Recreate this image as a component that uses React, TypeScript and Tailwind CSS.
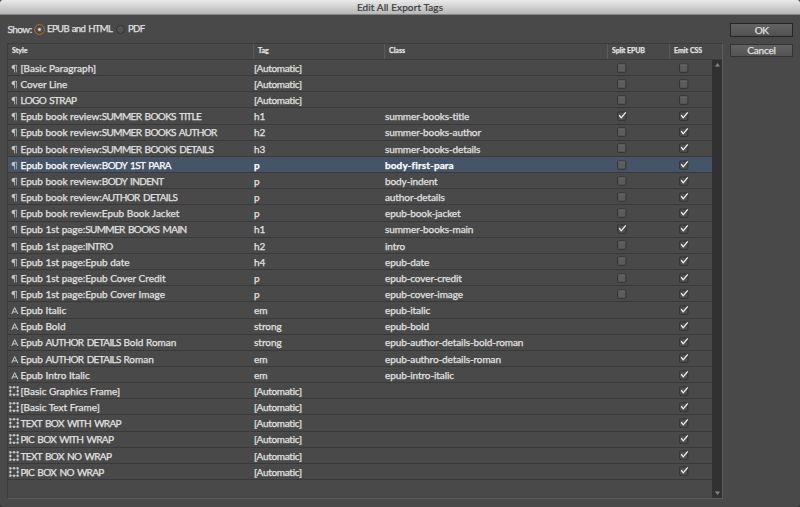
import React from "react";

type Kind = "para" | "char" | "object";
type Row = { kind: Kind; name: string; tag: string; cls?: string; split?: boolean; emit: boolean; selected?: boolean };

const rows: Row[] = [
  { kind: "para", name: "[Basic Paragraph]", tag: "[Automatic]", split: false, emit: false },
  { kind: "para", name: "Cover Line", tag: "[Automatic]", split: false, emit: false },
  { kind: "para", name: "LOGO STRAP", tag: "[Automatic]", split: false, emit: false },
  { kind: "para", name: "Epub book review:SUMMER BOOKS TITLE", tag: "h1", cls: "summer-books-title", split: true, emit: true },
  { kind: "para", name: "Epub book review:SUMMER BOOKS AUTHOR", tag: "h2", cls: "summer-books-author", split: false, emit: true },
  { kind: "para", name: "Epub book review:SUMMER BOOKS DETAILS", tag: "h3", cls: "summer-books-details", split: false, emit: true },
  { kind: "para", name: "Epub book review:BODY 1ST PARA", tag: "p", cls: "body-first-para", split: false, emit: true, selected: true },
  { kind: "para", name: "Epub book review:BODY INDENT", tag: "p", cls: "body-indent", split: false, emit: true },
  { kind: "para", name: "Epub book review:AUTHOR DETAILS", tag: "p", cls: "author-details", split: false, emit: true },
  { kind: "para", name: "Epub book review:Epub Book Jacket", tag: "p", cls: "epub-book-jacket", split: false, emit: true },
  { kind: "para", name: "Epub 1st page:SUMMER BOOKS MAIN", tag: "h1", cls: "summer-books-main", split: true, emit: true },
  { kind: "para", name: "Epub 1st page:INTRO", tag: "h2", cls: "intro", split: false, emit: true },
  { kind: "para", name: "Epub 1st page:Epub date", tag: "h4", cls: "epub-date", split: false, emit: true },
  { kind: "para", name: "Epub 1st page:Epub Cover Credit", tag: "p", cls: "epub-cover-credit", split: false, emit: true },
  { kind: "para", name: "Epub 1st page:Epub Cover Image", tag: "p", cls: "epub-cover-image", split: false, emit: true },
  { kind: "char", name: "Epub Italic", tag: "em", cls: "epub-italic", emit: true },
  { kind: "char", name: "Epub Bold", tag: "strong", cls: "epub-bold", emit: true },
  { kind: "char", name: "Epub AUTHOR DETAILS Bold Roman", tag: "strong", cls: "epub-author-details-bold-roman", emit: true },
  { kind: "char", name: "Epub AUTHOR DETAILS Roman", tag: "em", cls: "epub-authro-details-roman", emit: true },
  { kind: "char", name: "Epub Intro Italic", tag: "em", cls: "epub-intro-italic", emit: true },
  { kind: "object", name: "[Basic Graphics Frame]", tag: "[Automatic]", emit: true },
  { kind: "object", name: "[Basic Text Frame]", tag: "[Automatic]", emit: true },
  { kind: "object", name: "TEXT BOX WITH WRAP", tag: "[Automatic]", emit: true },
  { kind: "object", name: "PIC BOX WITH WRAP", tag: "[Automatic]", emit: true },
  { kind: "object", name: "TEXT BOX NO WRAP", tag: "[Automatic]", emit: true },
  { kind: "object", name: "PIC BOX NO WRAP", tag: "[Automatic]", emit: true },
];

function KindIcon({ kind }: { kind: Kind }) {
  if (kind === "para")
    return (
      <svg className="ml-[3px] block" width="7" height="9" viewBox="0 0 7 9">
        <path d="M3.6 1H2.6a2 2 0 0 0 0 4.2h1Z" fill="#c4c4c4" />
        <path d="M2.8 1.3h3M3.5 1v7.4M5.4 1v7.4" fill="none" stroke="#bdbdbd" strokeWidth=".8" />
      </svg>
    );
  if (kind === "char")
    return (
      <svg className="ml-[3px] block" width="8" height="9" viewBox="0 0 8 9">
        <path d="M.7 8 3.7 1.6 6.8 8M1.8 5.9h3.9" fill="none" stroke="#d0d0d0" strokeWidth="1" />
      </svg>
    );
  return (
    <svg className="ml-px -mt-px block" width="10" height="10" viewBox="0 0 10 10">
      <path d="M1.3 1.3h7.4v7.4H1.3Z" fill="none" stroke="#a0a0a0" strokeWidth=".8" />
      <path d="M.3.3h2v2h-2ZM4 .3h2v2H4ZM7.7.3h2v2h-2ZM.3 4h2v2h-2ZM7.7 4h2v2h-2ZM.3 7.7h2v2h-2ZM4 7.7h2v2H4ZM7.7 7.7h2v2h-2Z" fill="#cecece" />
    </svg>
  );
}

function Check({ on }: { on: boolean }) {
  return (
    <svg className="block" width="11" height="10" viewBox="0 0 11 10">
      <rect x=".6" y="1" width="8.3" height="8.3" rx="1" fill={on ? "#4f4f4f" : "#5c5c5c"} stroke="#323232" />
      {!on && <path d="M1.2 2h7" stroke="#6b6b6b" strokeWidth="1" />}
      {on && <path d="M2.2 4.2 4.2 6.8 8.8 1.3" fill="none" stroke="#f4f4f4" strokeWidth="1.3" />}
    </svg>
  );
}

function Radio({ on }: { on: boolean }) {
  return (
    <svg className="block" width="11" height="11" viewBox="0 0 11 11">
      <circle cx="5.5" cy="5.5" r={on ? 4.8 : 4} fill={on ? "#3c3832" : "#535353"} stroke={on ? "#cb7d2a" : "#333333"} strokeWidth="1" />
      {on && <circle cx="5.5" cy="5.5" r="3.3" fill="#555" />}
      {on && <circle cx="5.5" cy="5.5" r="1.3" fill="#f2f2f2" />}
    </svg>
  );
}

// Runs of capitals are set tighter than the mixed-case text around them.
function Label({ text }: { text: string }) {
  return (
    <span className="whitespace-pre">
      {text.split(/([A-Z]{2,}(?: [A-Z0-9]{2,})*)/).map((part, i) =>
        i % 2 ? <span key={i} className="tracking-[-0.65px] [word-spacing:1.4px]">{part}</span> : <span key={i}>{part}</span>
      )}
    </span>
  );
}

const grid = "grid grid-cols-[246px_131px_223px_62px_43px]";
const stroke = "[-webkit-text-stroke:0.25px_currentColor]";

export default function App() {
  return (
    <div className="flex h-[507px] w-[800px] flex-col overflow-hidden bg-[#333333] font-['Lato','Open_Sans',sans-serif] whitespace-nowrap text-[#e2e2e2] [font-variant-ligatures:none]">
      <header className="flex h-[15px] shrink-0 items-center justify-center rounded-t-[3px] border-b border-[#858585] bg-linear-to-b from-[#eaeaea] to-[#b7b7b7] pt-px text-[10px] tracking-[0.1px] text-[#393939] [-webkit-text-stroke:0.2px_currentColor]">
        Edit All Export Tags
      </header>
      <main className="flex min-h-0 flex-1 rounded-b-[4px] bg-[#494949]">
        <section className="ml-[7px] w-[716px]">
          <div className={`flex h-[28px] items-center pt-px text-[10px] ${stroke}`}>
            <span className="w-[27px] shrink-0 pl-[0.5px] tracking-[-0.55px]">Show:</span>
            <Radio on />
            <span className="ml-[2px] w-[67px] shrink-0 text-[9.5px] tracking-[-0.6px] [word-spacing:1px]">EPUB and HTML</span>
            <span className="ml-px"><Radio on={false} /></span>
            <span className="ml-[2px] text-[9.5px] tracking-[-0.6px]">PDF</span>
          </div>
          <div className="flex h-[456px] flex-col border border-b-[#5c5c5c] border-l-[#3c3c3c] border-r-[#5c5c5c] border-t-[#3a3a3a]">
            <div className={`${grid} h-[16px] shrink-0 border-b border-[#3b3b3b] text-[7px] leading-[13.5px] font-bold ${stroke}`}>
              <span className="pl-[4px]">Style</span>
              <span className="-ml-px border-l border-[#5a5a5a] pl-[4px]">Tag</span>
              <span className="-ml-px border-l border-[#5a5a5a] pl-[4px]">Class</span>
              <span className="-ml-px border-l border-[#5a5a5a] pl-[4px] tracking-[-0.1px]">Split EPUB</span>
              <span className="-ml-px w-[52px] border-l border-[#5a5a5a] pl-[4px]">Emit CSS</span>
            </div>
            <div className="flex min-h-0 flex-1">
              <div className="w-[704px]">
                {rows.map((r) => (
                  <div
                    key={r.name}
                    className={`${grid} h-[16.16px] items-center border-b border-[#393939] text-[10px] leading-[13px] ${stroke} ${r.selected ? "bg-[#465468] text-white" : ""}`}
                  >
                    <span className="flex items-center pt-[1.5px]">
                      <span className="w-[12.5px]"><KindIcon kind={r.kind} /></span>
                      <Label text={r.name} />
                    </span>
                    <span className={`pt-[1.5px] ${r.tag === "[Automatic]" ? "tracking-[-0.3px]" : ""} ${r.selected ? "font-bold" : ""}`}>{r.tag}</span>
                    <span className={`pt-[1.5px] ${r.selected ? "font-bold tracking-[0.1px]" : "tracking-[-0.1px]"}`}>{r.cls}</span>
                    <span className="pl-[9px]">{r.split !== undefined && <Check on={r.split} />}</span>
                    <span className="pl-[9px]"><Check on={r.emit} /></span>
                  </div>
                ))}
              </div>
              <div className="flex w-[10px] flex-col items-center justify-between bg-[#313131] py-[3px]">
                <svg width="5" height="4" viewBox="0 0 5 4"><path d="M0 3.5 2.5 0 5 3.5Z" fill="#858585" /></svg>
                <svg width="5" height="4" viewBox="0 0 5 4"><path d="M0 .5 2.5 4 5 .5Z" fill="#858585" /></svg>
              </div>
            </div>
          </div>
        </section>
        <aside className={`ml-[7px] flex w-[63px] flex-col gap-[7px] pt-[8px] text-[10px] ${stroke}`}>
          <button className="h-[14px] border border-[#252525] bg-linear-to-b from-[#636363] to-[#515151] leading-[12px] tracking-[-0.5px]">OK</button>
          <button className="h-[13px] border border-[#333333] bg-linear-to-b from-[#636363] to-[#535353] leading-[11px] tracking-[-0.2px]">Cancel</button>
        </aside>
      </main>
    </div>
  );
}
